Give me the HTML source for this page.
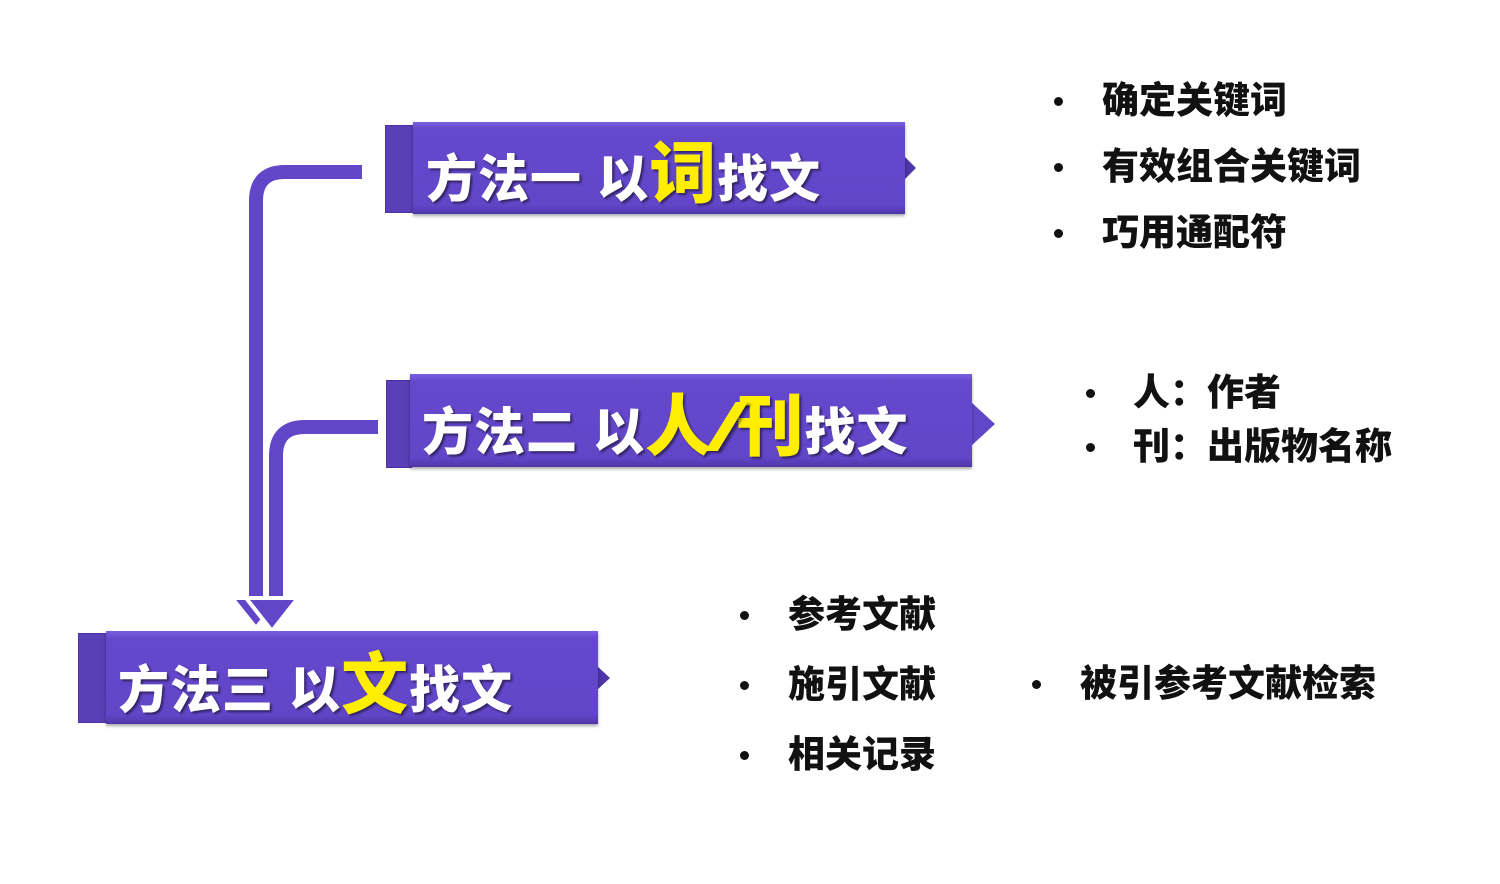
<!DOCTYPE html>
<html><head><meta charset="utf-8"><style>
body{margin:0;width:1500px;height:884px;background:#fff;position:relative;overflow:hidden;font-family:"Liberation Sans","Noto Sans CJK SC",sans-serif}
.a{position:absolute}
.back{background:#5a3fb8;border:1px solid #4a32a0}
.main{background:linear-gradient(#7a5ee0 0,#6548cc 8%,#6246c8 90%,#4e36a8 100%);box-shadow:0 2px 3px rgba(0,0,0,.35)}
.bt{color:#fff;font-weight:900;font-size:51px;letter-spacing:1px;white-space:nowrap;text-shadow:2px 2px 2px rgba(0,0,0,.5);line-height:1}
.y{color:#ffee00;font-size:67px}
.sl{display:inline-block;margin:0 2px;font-size:66px;font-style:italic;transform:scaleX(1.6)}
.li{font-weight:900;font-size:37px;color:#111;white-space:nowrap;line-height:1}
.dot{position:absolute;width:9px;height:9px;border-radius:50%;background:#111}
</style></head><body>
<svg class="a" style="left:0;top:0" width="1500" height="884">
<g fill="none" stroke-linejoin="round">
<path d="M362 172 H285 Q256 172 256 201 V602" stroke="#fff" stroke-width="22"/>
<path d="M378 427 H305 Q276 427 276 456 V602" stroke="#fff" stroke-width="22"/>
<path d="M362 172 H285 Q256 172 256 201 V602" stroke="#6246c8" stroke-width="14"/>
<path d="M378 427 H305 Q276 427 276 456 V602" stroke="#6246c8" stroke-width="14"/>
</g>
<polygon points="232,598 280,598 256,628" fill="#6246c8" stroke="#fff" stroke-width="4"/>
<polygon points="246,598 298,598 272,631" fill="#6246c8" stroke="#fff" stroke-width="4"/>
<polygon points="904,156 916,168 904,180" fill="#4e36a8"/>
<polygon points="971,402 995,424 971,446" fill="#6246c8"/>
<polygon points="597,666 610,678 597,690" fill="#4e36a8"/>
</svg>
<div class="a back" style="left:385px;top:125px;width:28px;height:86px"></div>
<div class="a main" style="left:413px;top:122px;width:492px;height:92px"></div>
<div class="a bt" style="left:426px;top:141px">方法一 以<span class="y">词</span>找文</div>
<div class="a back" style="left:386px;top:380px;width:24px;height:86px"></div>
<div class="a main" style="left:410px;top:374px;width:562px;height:93px"></div>
<div class="a bt" style="left:422px;top:394px">方法二 以<span class="y">人<span class="sl">/</span>刊</span>找文</div>
<div class="a back" style="left:78px;top:633px;width:28px;height:88px"></div>
<div class="a main" style="left:106px;top:631px;width:492px;height:93px"></div>
<div class="a bt" style="left:118px;top:652px">方法三 以<span class="y">文</span>找文</div>

<div class="dot" style="left:1054px;top:97px"></div><div class="a li" style="left:1102px;top:82px">确定关键词</div>
<div class="dot" style="left:1054px;top:163px"></div><div class="a li" style="left:1102px;top:148px">有效组合关键词</div>
<div class="dot" style="left:1054px;top:229px"></div><div class="a li" style="left:1102px;top:214px">巧用通配符</div>
<div class="dot" style="left:1086px;top:389px"></div><div class="a li" style="left:1133px;top:374px">人：作者</div>
<div class="dot" style="left:1086px;top:443px"></div><div class="a li" style="left:1133px;top:428px">刊：出版物名称</div>
<div class="dot" style="left:740px;top:611px"></div><div class="a li" style="left:788px;top:596px">参考文献</div>
<div class="dot" style="left:740px;top:681px"></div><div class="a li" style="left:788px;top:666px">施引文献</div>
<div class="dot" style="left:740px;top:751px"></div><div class="a li" style="left:788px;top:736px">相关记录</div>
<div class="dot" style="left:1032px;top:680px"></div><div class="a li" style="left:1080px;top:665px">被引参考文献检索</div>
</body></html>
